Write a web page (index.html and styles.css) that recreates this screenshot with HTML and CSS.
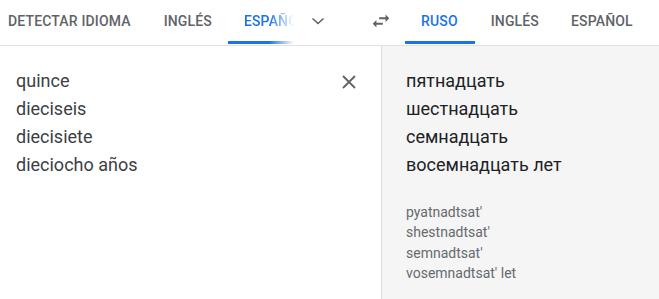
FILE: index.html
```html
<!DOCTYPE html>
<html lang="es">
<head>
    <meta charset="UTF-8">
    <meta name="viewport" content="width=device-width, initial-scale=1.0">
    <title>Traductor</title>
    <link rel="stylesheet" href="styles.css">
</head>
<body>
    <div class="translator">
        <div class="lang-bar">
            <div class="lang-side source-langs">
                <div class="tab first">DETECTAR IDIOMA</div>
                <div class="tab">INGLÉS</div>
                <div class="tab active clipped">ESPAÑOL</div>
                <div class="icon-btn">
                    <svg width="16" height="16" viewBox="0 0 16 16"><path d="M2.5 5.5 8 10.5l5.5-5" fill="none" stroke="#5f6368" stroke-width="1.6"/></svg>
                </div>
            </div>
            <div class="icon-btn swap">
                <svg width="22" height="22" viewBox="0 0 24 24"><path d="M6.99 11 3 15l3.99 4v-3H14v-2H6.99v-3zM21 9l-4-4v3h-7v2h7v3l4-4z" fill="#5f6368"/></svg>
            </div>
            <div class="lang-side target-langs">
                <div class="tab active">RUSO</div>
                <div class="tab">INGLÉS</div>
                <div class="tab">ESPAÑOL</div>
            </div>
        </div>

        <div class="panels">
            <div class="panel source">
                <div class="source-text">
                    <div>quince</div>
                    <div>dieciseis</div>
                    <div>diecisiete</div>
                    <div>dieciocho años</div>
                </div>
                <div class="clear-btn">
                    <svg width="24" height="24" viewBox="0 0 24 24"><path d="M6 6l12 12M18 6 6 18" fill="none" stroke="#5f6368" stroke-width="1.8"/></svg>
                </div>
            </div>
            <div class="panel target">
                <div class="target-text">
                    <div>пятнадцать</div>
                    <div>шестнадцать</div>
                    <div>семнадцать</div>
                    <div>восемнадцать лет</div>
                </div>
                <div class="translit">
                    <div>pyatnadtsat'</div>
                    <div>shestnadtsat'</div>
                    <div>semnadtsat'</div>
                    <div>vosemnadtsat' let</div>
                </div>
            </div>
        </div>
    </div>
</body>
</html>
```

FILE: styles.css
```css
body {
    margin: 0;
    font-family: Roboto, "Liberation Sans", Arial, sans-serif;
    background-color: #fff;
}
.translator {
    width: 659px;
    height: 299px;
    display: flex;
    flex-direction: column;
    overflow: hidden;
}
.lang-bar {
    display: flex;
    height: 45px;
    border-bottom: 1px solid #e0e0e0;
    flex-shrink: 0;
}
.lang-side {
    display: flex;
}
.source-langs {
    width: 357px;
}
.tab {
    position: relative;
    height: 45px;
    line-height: 42px;
    padding: 0 16px;
    font-size: 14px;
    font-weight: 500;
    letter-spacing: 0.15px;
    color: #5f6368;
    white-space: nowrap;
    box-sizing: border-box;
}
.tab.first {
    margin-left: -8px;
    padding-right: 17px;
}
.tab.active {
    color: #1a73e8;
}
.tab.active::after {
    content: "";
    position: absolute;
    left: 0;
    right: 0;
    bottom: 1px;
    height: 3px;
    background-color: #1a73e8;
}
.tab.clipped {
    width: 66px;
    overflow: hidden;
    -webkit-mask-image: linear-gradient(to right, #000 62%, transparent 100%);
    mask-image: linear-gradient(to right, #000 62%, transparent 100%);
}
.icon-btn {
    width: 48px;
    height: 42px;
    display: flex;
    align-items: center;
    justify-content: center;
}
.swap {
    width: 48px;
}
.target-langs .tab.active {
    padding-right: 17px;
}
.panels {
    display: flex;
    flex: 1;
}
.panel {
    box-sizing: border-box;
}
.source {
    width: 381px;
    display: flex;
    justify-content: space-between;
    padding: 21px 20px 0 16px;
}
.source-text {
    font-size: 18px;
    line-height: 28px;
    color: #3c4043;
}
.clear-btn {
    margin-top: 3px;
    height: 24px;
}
.target {
    flex: 1;
    background-color: #f5f5f5;
    border-left: 1px solid #dadce0;
    padding: 21px 16px 0 24px;
}
.target-text {
    font-size: 18px;
    line-height: 28px;
    color: #202124;
}
.translit {
    margin-top: 23px;
    font-size: 14px;
    line-height: 20.4px;
    color: #666a6e;
}
```
